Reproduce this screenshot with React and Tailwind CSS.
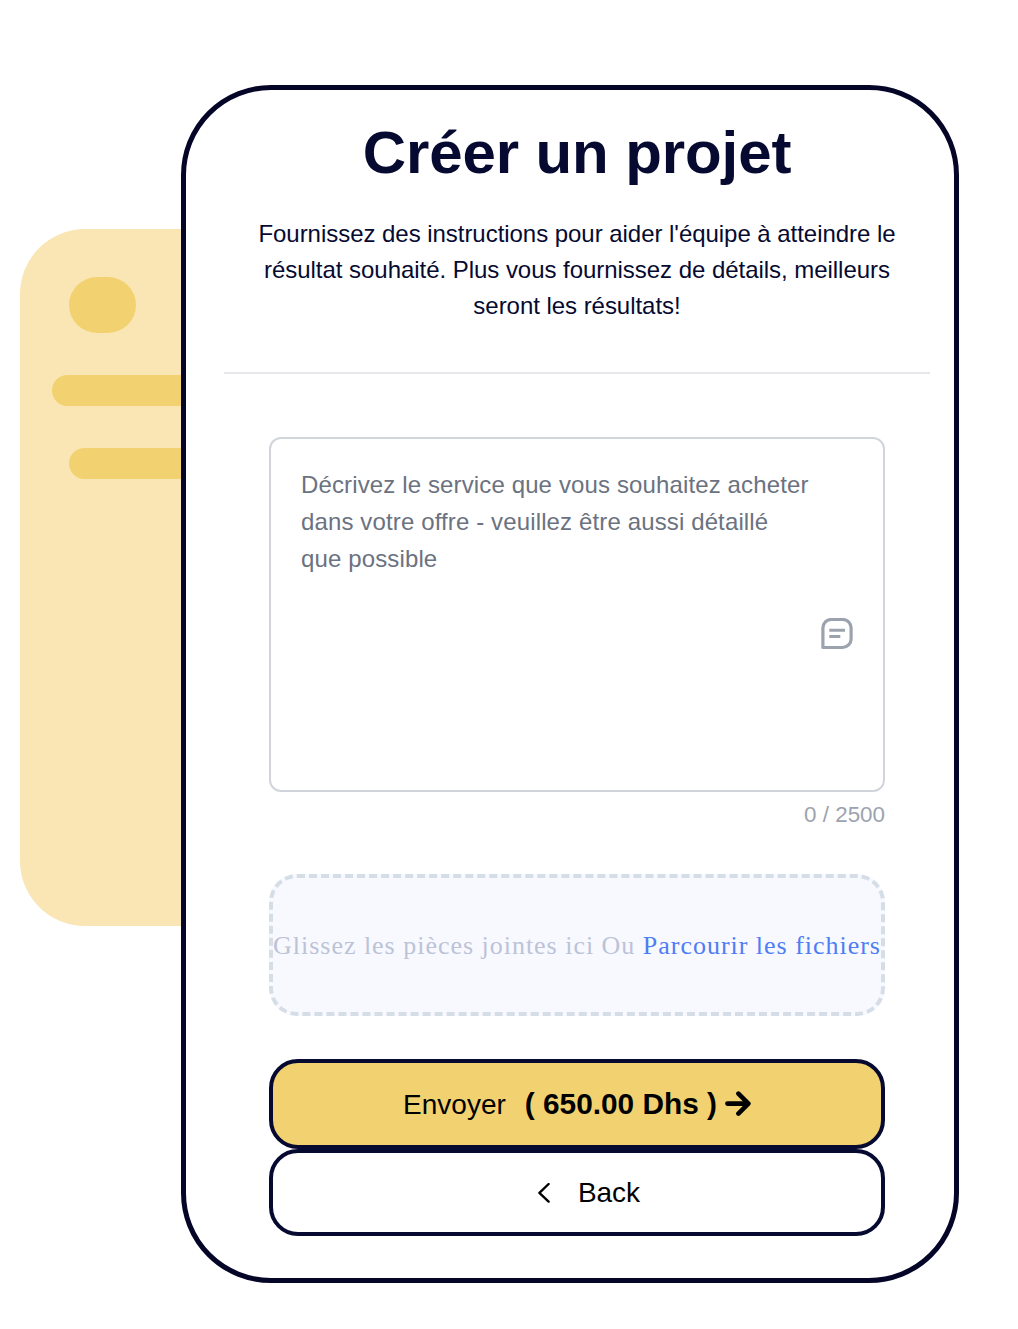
import React from "react";

function SidePanel() {
  return (
    <div className="mt-[229px] ml-5 flex h-[697px] w-[161px] shrink-0 flex-col items-end rounded-l-[65px] bg-[#f9e6b4]">
      <div className="mt-12 mr-[45px] h-14 w-[67px] rounded-full bg-[#f2d270]" />
      <div className="mt-[42px] h-[31px] w-[129px] rounded-l-full bg-[#f2d270]" />
      <div className="mt-[42px] h-[31px] w-28 rounded-l-full bg-[#f2d270]" />
    </div>
  );
}

function NoteIcon() {
  return (
    <svg className="h-8 w-8" viewBox="0 0 32 32" fill="none" stroke="#9ca3af" strokeWidth="3.2">
      <path d="M1.9 29.5V10a8.6 8.6 0 0 1 8.6-8.6H21.5a8.6 8.6 0 0 1 8.6 8.6V20.9a8.6 8.6 0 0 1-8.6 8.6Z" strokeLinejoin="round" />
      <path d="M8.3 12.2H24M8.3 18.5H19.3" strokeWidth="3" />
    </svg>
  );
}

export default function App() {
  return (
    <div className="flex h-[1329px] w-[1018px] items-start overflow-hidden bg-white font-['Liberation_Sans',Arial,sans-serif]">
      <SidePanel />
      <main className="mt-[85px] flex h-[1198px] w-[778px] shrink-0 flex-col rounded-[90px] border-5 border-[#050627] bg-white pr-6 pl-[38px]">
        <header className="flex h-[284px] flex-col items-center border-b-2 border-[#e5e7eb] whitespace-nowrap text-[#060a31]">
          <h1 className="mt-[27px] text-[60px] leading-[72px] font-bold tracking-[-0.1px]">Créer un projet</h1>
          <p className="mt-[27px] text-center text-2xl leading-9 tracking-[-0.04px]">
            Fournissez des instructions pour aider l'équipe à atteindre le
            <br />
            résultat souhaité. Plus vous fournissez de détails, meilleurs
            <br />
            seront les résultats!
          </p>
        </header>
        <form className="mx-[45px] mt-[63px] flex flex-col">
          <div className="flex h-[355px] justify-between rounded-xl border-2 border-[#d1d5db] pt-[26.6px] pr-[30px] pl-[30px]">
            <p className="text-2xl leading-[37.3px] tracking-[0.13px] whitespace-nowrap text-[#6b7280]">
              Décrivez le service que vous souhaitez acheter
              <br />
              dans votre offre - veuillez être aussi détaillé
              <br />
              que possible
            </p>
            <div className="mt-[152.4px] -ml-4">
              <NoteIcon />
            </div>
          </div>
          <div className="mt-[7px] text-right text-[22.4px] leading-8 text-[#9ca3af]">0 / 2500</div>
          <div className="mt-[43px] flex h-[142px] items-center justify-center rounded-[28px] border-4 border-dashed border-[#d5dde7] bg-[#f8f9ff] font-['Liberation_Serif','Times_New_Roman',serif] text-[26px] tracking-[0.98px] whitespace-pre text-[#bcc3d7]">
            Glissez les pièces jointes ici Ou <span className="text-[#4f7df3]">Parcourir les fichiers</span>
          </div>
          <button type="button" className="mt-[43px] flex h-[90px] items-center justify-center rounded-[29px] border-4 border-[#060a31] bg-[#f2d270] pt-px text-[28px] whitespace-nowrap text-black">
            Envoyer
            <b className="ml-[19px] text-[29.8px]">( 650.00 Dhs )</b>
            <svg className="ml-[6px] h-7 w-7" viewBox="0 0 28 28" fill="none" stroke="black" strokeWidth="4.6" strokeLinecap="round" strokeLinejoin="round">
              <path d="M4.4 12.6H25M15.4 2.6 25.4 12.6 15.4 22.6" />
            </svg>
          </button>
          <button type="button" className="flex h-[87px] items-center justify-center rounded-[29px] border-4 border-[#060a31] bg-white pt-px pl-6 text-[28px] text-black">
            <svg className="mr-7 h-[21px] w-3" viewBox="0 0 12 21" fill="none" stroke="black" strokeWidth="2.4" strokeLinecap="round" strokeLinejoin="round">
              <path d="M10.6 1 1.4 9.8 10.6 18.6" />
            </svg>
            Back
          </button>
        </form>
      </main>
    </div>
  );
}
